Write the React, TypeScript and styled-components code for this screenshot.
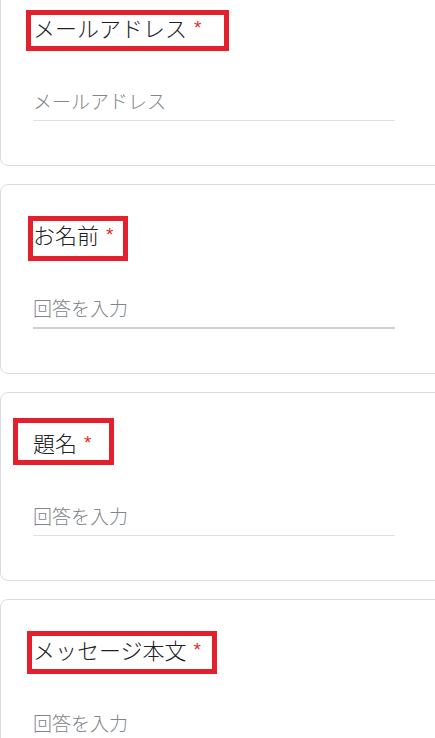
import { FC } from "react";
import styled, { createGlobalStyle } from "styled-components";

const GlobalStyle = createGlobalStyle`
  html, body {
    margin: 0;
    padding: 0;
    background: #ffffff;
    overflow: hidden;
  }
  body {
    font-family: "Noto Sans CJK JP", "Noto Sans", sans-serif;
  }
`;

interface IQuestion {
  label: string;
  placeholder: string;
  strongLine?: boolean;
  mark: { left: number; top: number; width: number; height: number };
}

const questions: IQuestion[] = [
  { label: "メールアドレス", placeholder: "メールアドレス", mark: { left: -7, top: -4, width: 203, height: 41 } },
  { label: "お名前", placeholder: "回答を入力", strongLine: true, mark: { left: -5, top: -5, width: 100, height: 45 } },
  { label: "題名", placeholder: "回答を入力", mark: { left: -20, top: -11, width: 101, height: 47 } },
  { label: "メッセージ本文", placeholder: "回答を入力", mark: { left: -6, top: -5, width: 190, height: 43 } },
];

const App: FC = () => {
  return (
    <>
      <GlobalStyle />
      <Page>
        {questions.map((q) => (
          <Card key={q.label}>
            <Title>
              {q.label}
              <Required>*</Required>
              <Mark $left={q.mark.left} $top={q.mark.top} $width={q.mark.width} $height={q.mark.height} />
            </Title>
            <Answer type="text" placeholder={q.placeholder} $strong={q.strongLine} />
          </Card>
        ))}
      </Page>
    </>
  );
};
export default App;

const Page = styled.div`
  display: flex;
  flex-direction: column;
  gap: 18px;
  margin-top: -23px;
  width: 100%;
  overflow: hidden;
`;

const Card = styled.div`
  display: flex;
  flex-direction: column;
  align-items: flex-start;
  width: 470px;
  padding: 36px 0 44px 32px;
  background: #ffffff;
  border: 1px solid #dadce0;
  border-radius: 8px;
`;

const Title = styled.div`
  position: relative;
  font-size: 22px;
  font-weight: 300;
  line-height: 26px;
  height: 26px;
  color: #202124;
  white-space: nowrap;
`;

const Required = styled.span`
  margin-left: 7px;
  font-family: "Liberation Sans", sans-serif;
  font-size: 19px;
  font-weight: 400;
  color: #d93025;
  vertical-align: 3px;
`;

const Mark = styled.span<{ $left: number; $top: number; $width: number; $height: number }>`
  position: absolute;
  left: ${(p) => p.$left}px;
  top: ${(p) => p.$top}px;
  width: ${(p) => p.$width}px;
  height: ${(p) => p.$height}px;
  box-sizing: border-box;
  border: 5px solid #e3202b;
  pointer-events: none;
`;

const Answer = styled.input<{ $strong?: boolean }>`
  margin-top: 42px;
  width: 362px;
  box-sizing: border-box;
  padding: 7px 0 8px;
  border: none;
  border-bottom: ${(p) => (p.$strong ? "2px solid #d0d0d0" : "1px solid #e0e0e0")};
  outline: none;
  font-family: "Noto Sans CJK JP", "Noto Sans", sans-serif;
  font-size: 19px;
  font-weight: 300;
  line-height: 23px;
  color: #202124;
  background: transparent;
  &::placeholder {
    color: #80868b;
  }
`;
